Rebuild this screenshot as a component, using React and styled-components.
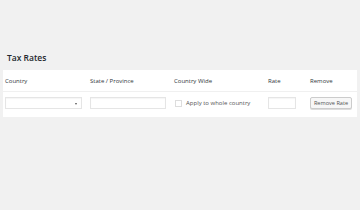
import React from "react";
import styled, { createGlobalStyle } from "styled-components";

const GlobalStyle = createGlobalStyle`
  html, body {
    margin: 0;
    padding: 0;
    background: #f1f1f1;
    font-family: "Open Sans", "Liberation Sans", sans-serif;
  }
`;

const Page = styled.div`
  width: 360px;
  height: 210px;
  padding: 51px 3px 0;
  box-sizing: border-box;
`;

const Title = styled.h2`
  margin: 0 0 6px 4px;
  font-size: 8.5px;
  font-weight: 600;
  line-height: 13px;
  color: #23282d;
`;

const Table = styled.div`
  background: #fff;
  width: 354px;
`;

const Row = styled.div`
  display: grid;
  grid-template-columns: 85px 84px 94px 42px 1fr;
  align-items: ${(p) => (p.head ? "center" : "start")};
  height: ${(p) => p.h}px;
  box-sizing: border-box;
  padding: ${(p) => (p.head ? "0 0 0 2px" : "5px 0 0 2px")};
  border-bottom: ${(p) => (p.head ? "1px solid #f0f0f0" : "none")};
`;

const Th = styled.div`
  font-size: 6px;
  color: #32373c;
`;

const Cell = styled.div`
  display: flex;
  align-items: center;
  height: 12px;
`;

const Field = styled.div`
  position: relative;
  width: ${(p) => p.w}px;
  height: 12px;
  box-sizing: border-box;
  border: 1px solid #e5e5e5;
  box-shadow: inset 0 1px 1px rgba(0, 0, 0, 0.04);
  background: #fff;
`;

const Caret = styled.span`
  position: absolute;
  right: 4px;
  top: 4.5px;
  width: 0;
  height: 0;
  border-left: 1px solid transparent;
  border-right: 1px solid transparent;
  border-top: 2px solid #555;
`;

const Check = styled.span`
  width: 7px;
  height: 7px;
  box-sizing: border-box;
  border: 1px solid #ddd;
  margin: 0 4px 0 1px;
`;

const Label = styled.span`
  font-size: 6px;
  color: #555;
`;

const Button = styled.button`
  width: 42px;
  height: 12px;
  padding: 0;
  font-family: inherit;
  font-size: 5.6px;
  color: #555;
  background: #f7f7f7;
  border: 1px solid #ccc;
  border-radius: 2px;
  box-shadow: 0 1px 0 #ddd;
`;

export default function App() {
  return (
    <Page>
      <GlobalStyle />
      <Title>Tax Rates</Title>
      <Table>
        <Row head h={22}>
          <Th>Country</Th>
          <Th>State / Province</Th>
          <Th>Country Wide</Th>
          <Th>Rate</Th>
          <Th>Remove</Th>
        </Row>
        <Row h={25}>
          <Cell>
            <Field w={77}>
              <Caret />
            </Field>
          </Cell>
          <Cell>
            <Field w={76} />
          </Cell>
          <Cell>
            <Check />
            <Label>Apply to whole country</Label>
          </Cell>
          <Cell>
            <Field w={28} />
          </Cell>
          <Cell>
            <Button>Remove Rate</Button>
          </Cell>
        </Row>
      </Table>
    </Page>
  );
}
